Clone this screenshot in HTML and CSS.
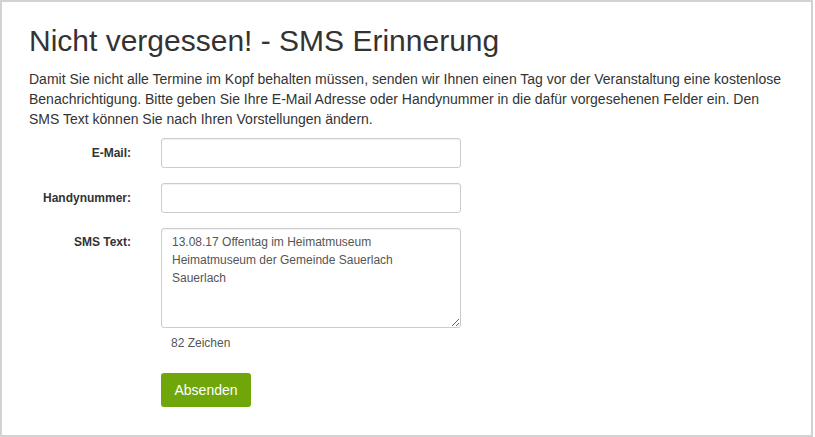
FILE: index.html
```html
<!DOCTYPE html>
<html>
<head>
    <title>SMS Erinnerung</title>
    <link rel="stylesheet" href="styles.css">
</head>
<body>
    <div class="page">
        <h1>Nicht vergessen! - SMS Erinnerung</h1>
        <p class="intro">Damit Sie nicht alle Termine im Kopf behalten müssen, senden wir Ihnen einen Tag vor der Veranstaltung eine kostenlose Benachrichtigung. Bitte geben Sie Ihre E-Mail Adresse oder Handynummer in die dafür vorgesehenen Felder ein. Den SMS Text können Sie nach Ihren Vorstellungen ändern.</p>

        <form class="reminder-form">
            <div class="row">
                <label for="email">E-Mail:</label>
                <input type="text" id="email" name="email">
            </div>
            <div class="row">
                <label for="phone">Handynummer:</label>
                <input type="text" id="phone" name="phone">
            </div>
            <div class="row">
                <label for="smstext" class="top">SMS Text:</label>
                <div>
                    <textarea id="smstext" name="smstext">13.08.17 Offentag im Heimatmuseum
Heimatmuseum der Gemeinde Sauerlach
Sauerlach</textarea>
                    <div class="counter">82 Zeichen</div>
                </div>
            </div>
            <div class="row">
                <span></span>
                <div><button type="button" class="submit">Absenden</button></div>
            </div>
        </form>
    </div>
</body>
</html>
```

FILE: styles.css
```css
html, body {
    margin: 0;
    padding: 0;
    background-color: #fff;
}
body {
    font-family: "Liberation Sans", Arial, sans-serif;
    color: #333;
}
.page {
    box-sizing: border-box;
    width: 813px;
    height: 437px;
    border: 2px solid #d2d2d2;
    padding: 22px 0 0 27px;
}
h1 {
    margin: 0;
    font-size: 30px;
    font-weight: normal;
    line-height: 33px;
    color: #333;
}
.intro {
    margin: 12px 0 0;
    width: 758px;
    font-size: 14px;
    line-height: 20px;
}
.reminder-form {
    margin-top: 9px;
}
.row {
    display: grid;
    grid-template-columns: 102px 300px;
    column-gap: 30px;
    align-items: center;
    margin-bottom: 15px;
}
.row label {
    text-align: right;
    font-size: 12px;
    font-weight: bold;
    color: #333;
}
.row label.top {
    align-self: start;
    padding-top: 7px;
}
input[type="text"], textarea {
    box-sizing: border-box;
    width: 300px;
    height: 30px;
    margin: 0;
    padding: 5px 10px;
    border: 1px solid #ccc;
    border-radius: 3px;
    font-family: "Liberation Sans", Arial, sans-serif;
    font-size: 12px;
    color: #555;
    background: #fff;
    box-shadow: inset 0 1px 1px rgba(0, 0, 0, 0.06);
}
textarea {
    display: block;
    height: 100px;
    line-height: 18px;
    padding: 4px 10px;
    resize: vertical;
}
.counter {
    margin-top: 7px;
    padding-left: 10px;
    font-size: 12px;
    line-height: 16px;
    color: #555;
}
.submit {
    margin-top: 7px;
    width: 90px;
    height: 34px;
    border: none;
    border-radius: 3px;
    background-color: #6fa60a;
    color: #fff;
    font-family: "Liberation Sans", Arial, sans-serif;
    font-size: 14px;
    cursor: pointer;
}
```
